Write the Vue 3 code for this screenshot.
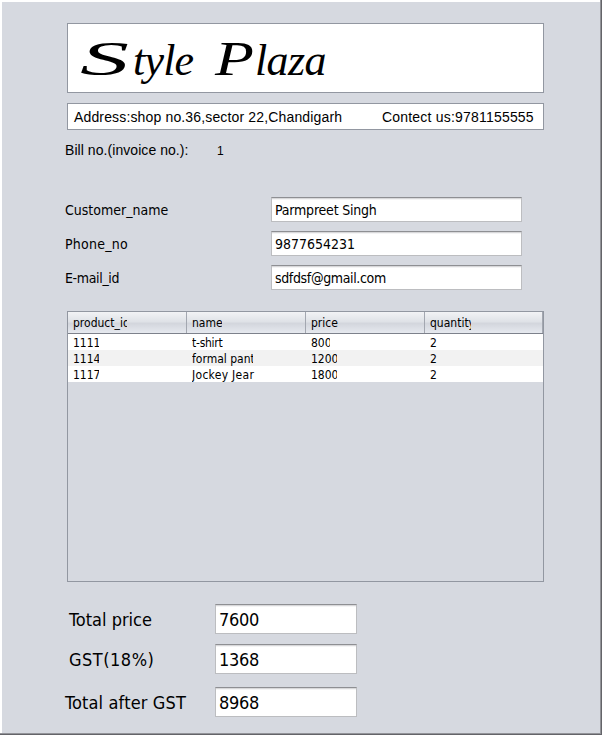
<script setup>
const customer = [
  { label: 'Customer_name', value: 'Parmpreet Singh', cls: 'f-name' },
  { label: 'Phone_no', value: '9877654231', cls: 'f-phone' },
  { label: 'E-mail_id', value: 'sdfdsf@gmail.com', cls: 'f-mail' },
]
const columns = [
  { text: 'product_id', w: 54 },
  { text: 'name', w: 30 },
  { text: 'price', w: 27 },
  { text: 'quantity', w: 41 },
]
const rows = [
  [{ text: '1111', w: 26 }, { text: 't-shirt', w: 31 }, { text: '800', w: 19 }, { text: '2', w: 8 }],
  [{ text: '1114', w: 26 }, { text: 'formal pant', w: 61 }, { text: '1200', w: 26 }, { text: '2', w: 8 }],
  [{ text: '1117', w: 26 }, { text: 'Jockey Jear', w: 64 }, { text: '1800', w: 26 }, { text: '2', w: 8 }],
]
const totals = [
  { label: 'Total price', value: '7600', cls: 't-price' },
  { label: 'GST(18%)', value: '1368', cls: 't-gst' },
  { label: 'Total after GST', value: '8968', cls: 't-after' },
]
</script>

<template>
  <main class="window">
    <header class="banner">
      <h1><span class="word style"><span class="cap">S</span><span>tyle</span></span><span class="word plaza"><span class="cap">P</span><span>laza</span></span></h1>
    </header>
    <section class="contact">
      <span class="address">Address:shop no.36,sector 22,Chandigarh</span>
      <span class="phone">Contect us:9781155555</span>
    </section>
    <div class="bill"><span class="bill-label">Bill no.(invoice no.):</span><span class="bill-no">1</span></div>

    <section class="customer">
      <div v-for="c in customer" :key="c.label" class="field" :class="c.cls">
        <label>{{ c.label }}</label>
        <div class="input"><span>{{ c.value }}</span></div>
      </div>
    </section>

    <section class="table">
      <div class="tr head">
        <div v-for="c in columns" :key="c.text" class="cell">
          <span :style="{ width: c.w + 'px' }">{{ c.text }}</span>
        </div>
      </div>
      <div v-for="(r, i) in rows" :key="i" class="tr row">
        <div v-for="(c, j) in r" :key="j" class="cell">
          <span :style="{ width: c.w + 'px' }">{{ c.text }}</span>
        </div>
      </div>
    </section>

    <section class="totals">
      <div v-for="t in totals" :key="t.label" class="total" :class="t.cls">
        <label>{{ t.label }}</label>
        <div class="input"><span>{{ t.value }}</span></div>
      </div>
    </section>
  </main>
</template>

<style>
body { margin: 0; background: #d6d9e0; }
</style>

<style scoped>
* { box-sizing: border-box; }
.window {
  width: 602px;
  height: 735px;
  padding: 23px 0 0 67px;
  background: #d6d9e0;
  box-shadow: inset -1px -1px 0 #646469, inset -2px -2px 0 #939499, inset 2px 2px 0 #fff;
  font-family: "DejaVu Sans Condensed", "DejaVu Sans", sans-serif;
  font-stretch: condensed;
  color: #000;
  overflow: hidden;
}
.banner, .contact { width: 477px; background: #fff; border: 1px solid #9297a1; }
.banner { height: 70px; }
h1 {
  display: flex;
  margin: 0;
  padding-left: 12px;
  font: italic 400 44px/69px "Liberation Serif", serif;
  white-space: nowrap;
}
.word { display: flex; align-items: baseline; height: 68px; }
.word span { display: block; }
.word.style { width: 135px; letter-spacing: -0.8px; }
.word.plaza { letter-spacing: -0.6px; }
.cap { font-size: 49px; transform-origin: left bottom; }
.style .cap { width: 53px; transform: scaleX(2); }
.plaza .cap { width: 40px; transform: scaleX(1.3); }
.contact {
  display: flex;
  height: 27px;
  margin-top: 10px;
  padding-left: 6px;
  font: 14px/27px "Liberation Sans", sans-serif;
  white-space: nowrap;
}
.address { width: 308px; letter-spacing: 0.15px; }
.phone { letter-spacing: 0.2px; }
.bill { display: flex; height: 20px; margin: 10px 0 0 -2px; font: 14px/20px "Liberation Sans", sans-serif; }
.bill-label { width: 152px; letter-spacing: 0.06px; }
.bill-no { font-size: 12px; line-height: 22px; }
.customer { display: flex; flex-direction: column; gap: 9px; margin: 37px 0 0 -2px; font-size: 14px; }
.field { display: flex; height: 25px; white-space: nowrap; }
.field label { width: 206px; line-height: 27px; }
.f-name .input { letter-spacing: -0.2px; }
.f-phone label { letter-spacing: 0.25px; }
.f-mail label { letter-spacing: -0.35px; }
.f-mail .input { letter-spacing: -0.35px; }
.input {
  background: #fff;
  border: 1px solid #bcbdc0;
  border-top-color: #8e8f93;
  box-shadow: inset 0 1px 0 #d8d8da, inset 0 2px 0 #f4f4f5;
  white-space: nowrap;
}
.field .input { width: 251px; height: 25px; padding-left: 3px; line-height: 24px; }
.table {
  width: 477px;
  height: 271px;
  margin-top: 21px;
  border: 1px solid #9297a1;
  font-size: 12px;
}
.tr { display: flex; overflow: hidden; }
.cell { flex: none; width: 119px; padding-left: 5px; }
.cell:last-child { width: 118px; }
.cell span { display: block; overflow: hidden; white-space: nowrap; }
.head { height: 22px; line-height: 22px; border-bottom: 1px solid #7d818b; background: linear-gradient(#f2f3f5 0, #dfe2e7 45%, #d3d6dd 55%, #e6e9ef 100%); }
.head .cell { border-right: 1px solid #a3a7b0; }
.row { height: 16px; line-height: 18px; background: #fff; }
.row:nth-child(odd) { background: #f2f2f2; }
.row:nth-child(2) .cell:nth-child(2) { letter-spacing: -0.25px; }
.row:nth-child(4) .cell:nth-child(2) { letter-spacing: 0.3px; }
.totals { display: flex; flex-direction: column; margin: 22px 0 0 -2px; font-size: 18px; }
.total { display: flex; height: 30px; white-space: nowrap; }
.total label { width: 150px; line-height: 32px; }
.total .input { width: 142px; height: 30px; padding-left: 3px; line-height: 29px; letter-spacing: -0.3px; }
.t-price label, .t-gst label { padding-left: 4px; }
.t-gst { margin-top: 10px; }
.t-gst label { letter-spacing: 0.5px; }
.t-after { margin-top: 13px; }
.t-after label { letter-spacing: 0.15px; }
</style>
